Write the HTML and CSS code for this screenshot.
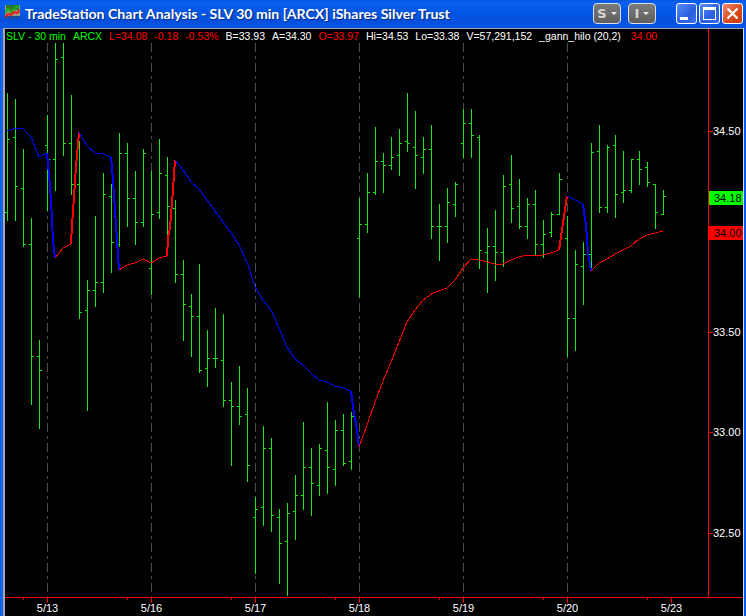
FILE: index.html
```html
<!DOCTYPE html>
<html lang="en">
<head>
    <meta charset="UTF-8">
    <title>TradeStation Chart Analysis</title>
    <link rel="stylesheet" href="styles.css">
</head>
<body>
    <div class="window">
        <div class="titlebar">
            <svg class="app-icon" width="15" height="14" viewBox="0 0 15 14">
                <rect x="0" y="0" width="15" height="14" fill="#9a9a88"/>
                <rect x="1" y="0" width="13" height="5" fill="#2e7a2e"/>
                <rect x="0" y="11" width="15" height="3" fill="#1c4a9c"/>
                <polyline points="0,8 3,4 6,7 10,3 14,1" fill="none" stroke="#18b018" stroke-width="2"/>
                <polyline points="0,12 3,9 6,10 9,7 12,8 15,5" fill="none" stroke="#e82020" stroke-width="2"/>
            </svg>
            <span class="title">TradeStation Chart Analysis - SLV 30 min [ARCX] iShares Silver Trust</span>
            <div class="title-buttons">
                <div class="menu-btn"><b>S</b><i class="caret"></i></div>
                <div class="menu-btn"><b>I</b><i class="caret"></i></div>
            </div>
            <div class="win-buttons">
                <div class="win-btn"><i class="min-glyph"></i></div>
                <div class="win-btn"><i class="max-glyph"></i></div>
                <div class="win-btn close">
                    <svg width="13" height="13" viewBox="0 0 13 13"><path d="M1.5 1.5 L11.5 11.5 M11.5 1.5 L1.5 11.5" stroke="#fff" stroke-width="2.2"/></svg>
                </div>
            </div>
        </div>
        <div class="chart-area">
            <div class="status">
                <span class="green">SLV - 30 min</span>
                <span class="green">ARCX</span>
                <span class="red">L=34.08</span>
                <span class="red">-0.18</span>
                <span class="red">-0.53%</span>
                <span>B=33.93</span>
                <span>A=34.30</span>
                <span class="red">O=33.97</span>
                <span>Hi=34.53</span>
                <span>Lo=33.38</span>
                <span>V=57,291,152</span>
                <span>_gann_hilo (20,2)</span>
                <span class="red last">34.00</span>
            </div>
            <svg id="chart" class="chart" width="738" height="587" viewBox="5 29 738 587" shape-rendering="crispEdges"></svg>
        </div>
    </div>
    <script src="chart.js"></script>
</body>
</html>
```

FILE: styles.css
```css
* {
    margin: 0;
    padding: 0;
    box-sizing: border-box;
}

body {
    width: 746px;
    height: 616px;
    overflow: hidden;
    background-color: #000;
    font-family: "Liberation Sans", Arial, sans-serif;
}

.window {
    display: flex;
    flex-direction: column;
    height: 616px;
    background: linear-gradient(90deg, #0a58e8 0, #1c6cf4 2px, #0a58e8 3px);
}

/* Title bar */
.titlebar {
    height: 28px;
    flex: none;
    display: flex;
    align-items: center;
    padding: 0 3px 1px 5px;
    background: linear-gradient(#0a58e0 0, #0a62f0 3px, #0458e6 10px, #0450dc 22px, #0a58ec 27px, #0648c8 28px);
}

.app-icon {
    flex: none;
    margin-right: 5px;
    margin-top: -3px;
}

.title {
    flex: 1;
    color: #fff;
    font-family: Lato, "Liberation Sans", sans-serif;
    font-weight: bold;
    font-size: 14.1px;
    white-space: nowrap;
    text-shadow: 1px 1px 1px #0a2a80;
}

.title-buttons {
    display: flex;
    gap: 7px;
    margin-right: 20px;
}

.menu-btn {
    width: 28px;
    height: 21px;
    display: flex;
    align-items: center;
    justify-content: center;
    gap: 4px;
    background: linear-gradient(#7c7c7c, #5e5e5e);
    border: 1px solid #d8e0ec;
    border-radius: 4px;
    color: #d8d8d8;
    font-family: "DejaVu Sans", sans-serif;
    font-size: 13px;
}

.caret {
    width: 0;
    height: 0;
    border-left: 3px solid transparent;
    border-right: 3px solid transparent;
    border-top: 3px solid #f0f0f0;
}

.win-buttons {
    display: flex;
    gap: 2px;
}

.win-btn {
    width: 21px;
    height: 21px;
    display: flex;
    align-items: center;
    justify-content: center;
    border: 1px solid #fff;
    border-radius: 3px;
    background: linear-gradient(135deg, #5a8cf4, #2a5ee0 60%, #3a70ec);
}

.win-btn.close {
    background: linear-gradient(135deg, #ee8a68, #d8481c 60%, #c83c10);
}

.min-glyph {
    width: 8px;
    height: 3px;
    background: #fff;
    align-self: flex-end;
    margin: 0 6px 3px 0;
}

.max-glyph {
    width: 13px;
    height: 13px;
    border: 1px solid #fff;
    border-top-width: 3px;
}

/* Chart */
.chart-area {
    position: relative;
    flex: 1;
    margin: 0 2px 0 3px;
    background: #000;
    border-top: 1px solid #a8a8a8;
    border-left: 2px solid #a8a8a8;
    border-right: 1px solid #d8e0f0;
}

.chart {
    display: block;
}

.status {
    position: absolute;
    left: 1px;
    top: 0;
    display: flex;
    gap: 7px;
    height: 14px;
    line-height: 14px;
    font-size: 10.5px;
    color: #fff;
    white-space: nowrap;
}

.green {
    color: #00ff00;
}

.red {
    color: #ff0000;
}

.last {
    margin-left: 3px;
}
```

FILE: chart.js
```js
// x = 7 + 8 * i, [high, low, open, close] in page pixels
const bars = [
    [93,221,212,139],[99,221,137,186],[149,247,188,244],[218,405,244,356],[340,429,356,370],
    [115,211,145,159],[43,191,159,59],[43,156,57,143],[95,195,143,184],[141,319,184,312],
    [280,411,310,290],[216,307,290,282],[173,293,282,194],[184,273,196,242],[133,247,244,153],
    [143,227,153,198],[171,245,198,222],[149,227,222,153],[171,295,268,214],[139,219,212,173],
    [157,239,175,206],[200,283,208,274],[260,341,274,304],[294,357,306,316],[264,373,316,370],
    [330,387,368,358],[308,368,358,358],[314,407,360,400],[382,466,400,406],[366,425,406,416],
    [388,482,414,465],[497,574,517,509],[426,526,507,448],[438,532,448,515],[509,584,517,543],
    [503,596,541,513],[475,540,511,495],[422,510,495,467],[448,516,467,483],[444,496,485,448],
    [402,494,450,467],[420,486,469,430],[414,466,430,463],[412,470,461,416],[198,297,238,224],
    [173,233,224,192],[127,195,192,161],[153,193,161,165],[137,170,165,157],[129,176,155,143],
    [93,152,141,143],[111,189,147,155],[137,174,157,149],[125,239,149,226],[204,261,226,226],
    [188,243,226,202],[182,217,204,184],[109,158,143,123],[109,158,123,135],[135,269,137,250],
    [228,293,252,246],[210,281,246,252],[175,267,252,186],[155,223,184,208],[179,229,206,226],
    [198,239,226,204],[190,255,204,244],[220,258,244,234],[212,237,232,214],[173,215,214,179],
    [216,357,238,318],[250,351,318,264],[242,305,266,254],[143,270,254,152],[125,213,151,207],
    [145,213,207,147],[135,218,145,194],[151,203,192,190],[159,193,190,159],[151,185,159,169],
    [162,187,167,182],[184,229,184,212],[190,214,214,196]
];

const hilo = [
    ["#0000ff", "7,131 15,128.5 23,129 31,137 39,157 47,153 49,175 51,200 53,240 55,258"],
    ["#ff0000", "55,258 63,248 71,244 72,225 74,197 76,167 79,132"],
    ["#0000ff", "79,132 87,146 95,153 103,154 111,157 112,166 114,195 116,225 119,270"],
    ["#ff0000", "119,270 127,265 135,263 143,259 151,263 159,258 167,256 168,238 170,227 172,203 174,175 175,160"],
    ["#0000ff", "175,160 183,170 191,182 199,189 207,200 215,211 223,222 231,233 239,245 247,262 255,287 263,300 271,310 279,328 287,347 295,359 303,365 311,373 319,380 327,382 335,386 343,388 351,391 353,407 357,430 359,447"],
    ["#ff0000", "359,447 367,425 375,402 383,381 391,362 399,342 407,322 415,310 423,300 433,293 447,288 455,280 463,268 471,259 475,259 487,262 495,264 503,264 511,260 519,257 527,255 543,255 551,253 559,250 563,223 567,196"],
    ["#0000ff", "567,196 575,200 583,204 586,225 588,253 591,271"],
    ["#ff0000", "591,271 599,263 607,259 615,254 623,250 631,246 639,239 647,235 655,233 663,231"]
];

const prices = [["34.50", 131], ["33.50", 332], ["33.00", 432], ["32.50", 533]];
const dates = [["5/13", 47], ["5/16", 151], ["5/17", 255], ["5/18", 359], ["5/19", 463], ["5/20", 567], ["5/23", 671]];

const svg = document.getElementById("chart");
let out = "";

function line(x1, y1, x2, y2, color, extra) {
    out += `<line x1="${x1}" y1="${y1}" x2="${x2}" y2="${y2}" stroke="${color}" ${extra || ""}/>`;
}

function label(txt, x, y, color, anchor) {
    out += `<text x="${x}" y="${y}" fill="${color}" font-size="11" text-anchor="${anchor || "start"}">${txt}</text>`;
}

// dashed day separators
dates.slice(0, 6).forEach(d => {
    line(d[1] + 0.5, 43, d[1] + 0.5, 597, "#4c4c4c", 'stroke-dasharray="9 4 3 4"');
});

bars.forEach((b, i) => {
    const x = 7 + 8 * i + 0.5;
    line(x, b[0], x, b[1], "#18e818");
    line(x - 2.5, b[2] + 0.5, x, b[2] + 0.5, "#18e818");
    line(x, b[3] + 0.5, x + 2.5, b[3] + 0.5, "#18e818");
});

// steep parts of the line come out 2px wide
hilo.forEach(h => {
    const pts = h[1].split(" ").map(p => p.split(",").map(Number));
    for (let i = 1; i < pts.length; i++) {
        const [x1, y1] = pts[i - 1];
        const [x2, y2] = pts[i];
        const steep = Math.abs(y2 - y1) > 4 * Math.abs(x2 - x1);
        line(x1, y1, x2, y2, h[0], `stroke-width="${steep ? 2 : 1}"`);
    }
});

// axes
line(708.5, 29, 708.5, 597, "#ff0000");
line(5, 597.5, 743, 597.5, "#ff0000");

prices.forEach(p => {
    line(708, p[1] + 0.5, 713, p[1] + 0.5, "#ff0000");
    label(p[0], 713, p[1] + 4, "#fff");
});

dates.forEach(d => {
    line(d[1] + 0.5, 597, d[1] + 0.5, 603, "#ff0000");
    label(d[0], d[1] + 0.5, 612, "#fff", "middle");
});
[23, 127, 231, 335, 439, 543, 647].forEach(x => line(x + 0.5, 597, x + 0.5, 600, "#ff0000"));

// last price tags
out += '<rect x="709" y="191" width="34" height="14" fill="#00ff00"/>';
label("34.18", 714, 202, "#000");
out += '<rect x="709" y="226" width="34" height="14" fill="#ff0000"/>';
label("34.00", 714, 237, "#000");

svg.innerHTML = out;
```
